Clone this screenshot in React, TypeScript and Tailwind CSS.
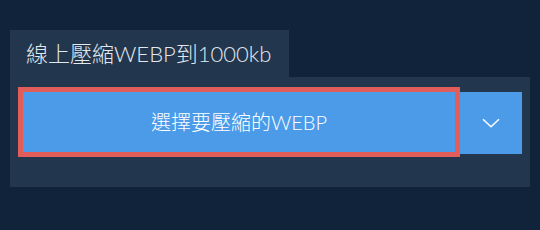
import React from "react";

export default function App() {
  return (
    <div className="w-[540px] h-[230px] bg-[#10233a] pt-[30px] px-[10px] font-['Lato','Noto_Sans_CJK_TC',sans-serif] font-light">
      {/* Tab */}
      <div className="w-[279px] h-[47px] bg-[#22364d] flex items-center pl-4">
        <h1 className="text-[22px] text-[#e3e8ee] leading-none whitespace-nowrap">線上壓縮WEBP到1000kb</h1>
      </div>

      {/* Panel */}
      <div className="bg-[#22364d] px-2 pt-[10px] pb-[30px]">
        <div className="flex items-start">
          <button className="w-[442px] h-[70px] border-[5px] border-[#e05d5a] bg-[#4c9be8] text-white text-[20px] leading-none flex items-center justify-center">
            選擇要壓縮的WEBP
          </button>
          <button className="w-[62px] h-[62px] mt-[5px] bg-[#4c9be8] flex items-center justify-center">
            <svg width="18" height="10" viewBox="0 0 18 10" fill="none">
              <path d="M1 1.2 L9 8.8 L17 1.2" stroke="white" strokeWidth="1.5" />
            </svg>
          </button>
        </div>
      </div>
    </div>
  );
}
